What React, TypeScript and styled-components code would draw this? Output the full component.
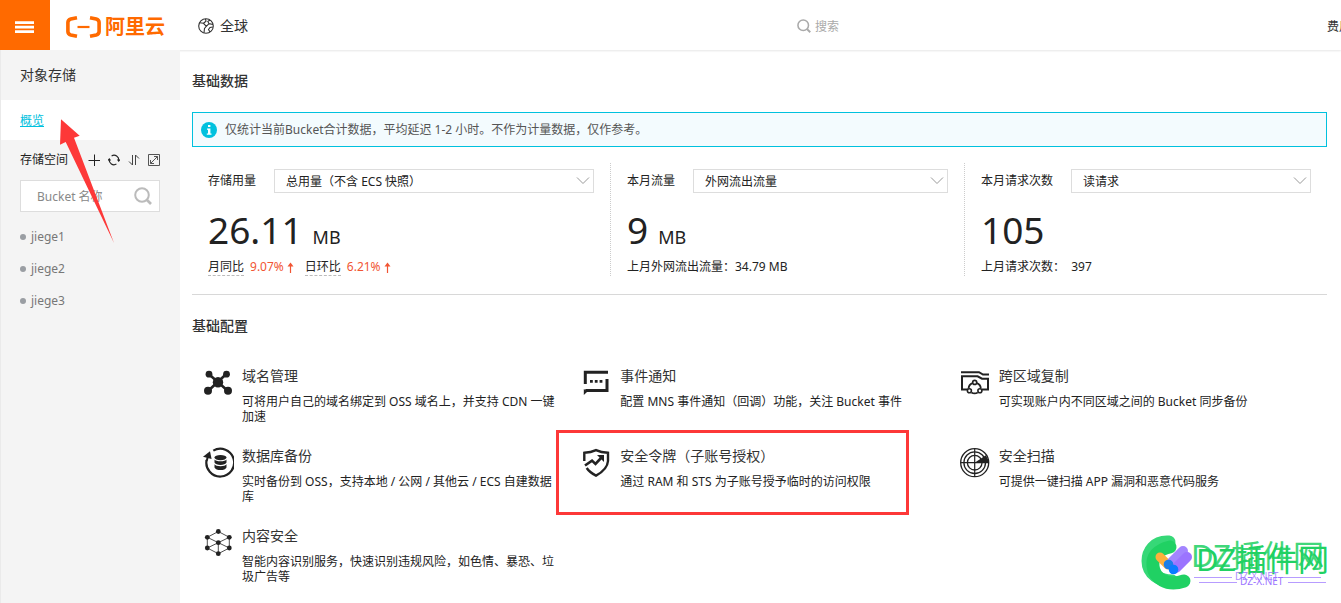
import React from "react";
import styled, { createGlobalStyle } from "styled-components";

const GlobalStyle = createGlobalStyle`
  *, *::before, *::after { box-sizing: border-box; }
  body {
    margin: 0;
    background: #fff;
    color: #222;
    font: 12px/16px "Noto Sans", "Noto Sans CJK SC", sans-serif;
  }
  button, input, select { font: inherit; color: inherit; }
  h1, h2, h3, p, ul { margin: 0; padding: 0; font-weight: 400; }
  a { color: inherit; text-decoration: none; }
  svg { display: block; flex: none; }
`;

const Page = styled.div`
  position: relative;
  min-height: 100vh;
  display: flex;
  flex-direction: column;
  overflow: hidden;
`;

const Header = styled.header`
  display: flex;
  align-items: center;
  height: 50px;
  background: #fff;
  box-shadow: 0 1px 2px rgba(0, 0, 0, 0.1);
  position: relative;
`;

const MenuButton = styled.button`
  display: flex;
  align-items: center;
  justify-content: center;
  width: 50px;
  height: 50px;
  padding: 4px 0 0;
  border: 0;
  background: #ff6a00;
`;

const Brand = styled.a`
  display: flex;
  align-items: center;
  gap: 4px;
  height: 50px;
  margin: 0 33px 0 16px;
  padding-top: 4px;
  color: #ff6a00;
  font-size: 20px;
  font-weight: 700;
  line-height: 24px;
`;

const Region = styled.button`
  display: flex;
  align-items: center;
  gap: 6px;
  margin-right: auto;
  padding: 2px 0 0;
  border: 0;
  background: none;
  color: #333;
  font-size: 14px;
  line-height: 20px;
`;

const HeaderSearch = styled.label`
  display: flex;
  align-items: center;
  gap: 4px;
  width: 520px;
  margin-right: 10px;
  padding-top: 2px;
  color: #aaa;
`;

const SearchInput = styled.input`
  flex: 1;
  min-width: 0;
  padding: 2px 0 0;
  border: 0;
  outline: 0;
  background: none;
  line-height: 20px;
  &::placeholder { color: #aaa; opacity: 1; }
`;

const HeaderNav = styled.nav`
  width: 14px;
  padding-top: 4px;
  overflow: hidden;
  white-space: nowrap;
  color: #333;
`;

const Body = styled.div`
  flex: 1;
  display: flex;
`;

const Sidebar = styled.aside`
  position: relative;
  flex: none;
  width: 180px;
  border-left: 1px solid #eaeaea;
  background: #f4f4f4;
`;

const ProductName = styled.h1`
  padding: 0 19px;
  color: #333;
  font-size: 14px;
  line-height: 50px;
`;

const ActiveItem = styled.div`
  height: 40px;
  padding: 0 19px;
  background: #fff;
  line-height: 42px;
  a { color: #00c1de; text-decoration: underline; }
`;

const BucketHead = styled.div`
  display: flex;
  align-items: center;
  justify-content: space-between;
  height: 40px;
  padding: 0 20px 0 19px;
  line-height: 42px;
`;

const Tools = styled.div`
  display: flex;
  gap: 8px;
`;

const ToolButton = styled.button`
  width: 12px;
  height: 12px;
  padding: 0;
  border: 0;
  background: none;
`;

const BucketSearch = styled.label`
  display: flex;
  align-items: center;
  height: 32px;
  margin: 0 20px 9px 19px;
  padding: 0 7px 0 16px;
  border: 1px solid #ddd;
  background: #fff;
  color: #bbb;
  input::placeholder { color: #888; }
`;

const BucketList = styled.ul`
  list-style: none;
  padding-left: 19px;
`;

const BucketItem = styled.li`
  display: flex;
  align-items: center;
  gap: 5px;
  height: 32px;
  color: #777;
  &::before {
    content: "";
    width: 6px;
    height: 6px;
    border-radius: 50%;
    background: #9a9ea3;
  }
`;

const Pointer = styled.svg`
  position: absolute;
  left: 59px;
  top: 69px;
  z-index: 2;
  pointer-events: none;
`;

const Main = styled.main`
  flex: 1;
  min-width: 0;
  padding: 20px 14px 0 12px;
`;

const SectionTitle = styled.h2<{ $spaced?: boolean }>`
  padding-top: ${(p) => (p.$spaced ? "20px" : "0")};
  color: #333;
  font-size: 14px;
  font-weight: 500;
  line-height: 22px;
`;

const Notice = styled.div`
  display: flex;
  align-items: center;
  gap: 8px;
  height: 35px;
  margin: 20px 0 16px;
  padding: 0 8px;
  border: 1px solid #00c1de;
  background: #f3fbfe;
  color: #555;
`;

const Stats = styled.div`
  display: grid;
  grid-template-columns: 419fr 354fr 362fr;
  padding-bottom: 18px;
  border-bottom: 1px solid #d8d8d8;
`;

const Stat = styled.section`
  padding: 6px 16px 0;
  min-width: 0;
  &:not(:last-child) { border-right: 1px dotted #ccc; }
`;

const StatHead = styled.div`
  display: flex;
  align-items: center;
  gap: 18px;
  line-height: 26px;
  height: 24px;
`;

const SelectBox = styled.div`
  position: relative;
  flex: 1;
  min-width: 0;
  svg {
    position: absolute;
    right: 4px;
    top: 7px;
    pointer-events: none;
  }
`;

const Select = styled.select`
  display: block;
  width: 100%;
  height: 24px;
  padding: 2px 24px 0 11px;
  border: 1px solid #ddd;
  border-radius: 0;
  background: #fff;
  appearance: none;
  line-height: 16px;
`;

const Figure = styled.p`
  display: flex;
  align-items: baseline;
  gap: 10px;
  height: 65px;
  padding-top: 8px;
  font-size: 37px;
  line-height: 58px;
  small { font-size: 18px; }
`;

const StatNote = styled.div`
  display: flex;
  height: 18px;
  line-height: 18px;
  white-space: pre;
`;

const Term = styled.span`
  height: 18px;
  border-bottom: 1px dashed #bbb;
`;

const Change = styled.span`
  display: flex;
  align-items: center;
  gap: 3px;
  margin: 0 11px 0 6px;
  color: #f15533;
`;

const Features = styled.div`
  display: grid;
  grid-template-columns: repeat(3, 1fr);
  grid-auto-rows: 80px;
  margin-top: 23px;
`;

const FeatureCard = styled.a<{ $marked?: boolean }>`
  position: relative;
  display: flex;
  gap: 8px;
  padding: 7px 8px 0 10px;
  &::after {
    content: "";
    display: ${(p) => (p.$marked ? "block" : "none")};
    position: absolute;
    inset: -10px 40px 5px -14px;
    border: 3px solid #fd3838;
    pointer-events: none;
  }
`;

const FeatureText = styled.div`
  flex: 1;
  min-width: 0;
`;

const FeatureTitle = styled.h3`
  color: #333;
  font-size: 14px;
  line-height: 18px;
`;

const FeatureDesc = styled.p`
  margin-top: 9px;
  line-height: 15px;
`;

const Watermark = styled.svg`
  position: absolute;
  right: 11px;
  bottom: 10px;
  pointer-events: none;
`;

const SearchIcon = ({ size }: { size: number }) => (
  <svg width={size} height={size} viewBox="0 0 18 18" fill="none" stroke="currentColor" strokeWidth="2">
    <circle cx="8" cy="8" r="6.8" />
    <path d="M13 13l4 4" strokeWidth="2.6" />
  </svg>
);

const Chevron = () => (
  <svg width="14" height="10" viewBox="0 0 14 10" fill="none" stroke="#999">
    <path d="M1 1.5L7 7.5L13 1.5" />
  </svg>
);

const UpArrow = () => (
  <svg width="7" height="11" viewBox="0 0 7 11" fill="none" stroke="currentColor" strokeWidth="1.2">
    <path d="M3.5 11V2" />
    <path d="M0.5 4.5L3.5 0.5L6.5 4.5Z" fill="currentColor" stroke="none" />
  </svg>
);

const FeatureIcon = ({ children }: { children: React.ReactNode }) => (
  <svg width="32" height="32" viewBox="0 0 32 32" fill="none" stroke="#222" aria-hidden="true">
    {children}
  </svg>
);

const icons = {
  domain: (
    <>
      <path d="M7 7.3L25.7 23.7M24.3 7L6.3 23.7" strokeWidth="2.6" />
      <g fill="#222" stroke="none">
        <circle cx="7" cy="7.2" r="3.4" />
        <circle cx="24.5" cy="7.2" r="3.4" />
        <circle cx="6" cy="23.7" r="4" />
        <circle cx="26" cy="23.7" r="4" />
        <circle cx="16" cy="15.3" r="5.2" />
      </g>
    </>
  ),
  notify: (
    <>
      <path d="M5.300 17V5.300H28M27 12V23.500H5.300" strokeWidth="3" />
      <path d="M3.800 22V28L7.500 24.500" fill="#222" stroke="none" />
      <path d="M10 14.300h2.800M14.800 14.300h2.800M19.600 14.300h2.800" strokeWidth="2.800" />
    </>
  ),
  copy: (
    <>
      <path d="M2 5.2H20L24 7.6H30" strokeWidth="2" />
      <path d="M9 22.5H3V9.3H18.6L23 11.7H29V22.5H23" strokeWidth="2" />
      <path d="M13.6 16.2A6 6 0 0 0 9.6 21.6M17.8 16.2A6 6 0 0 1 21.8 21.6M12.4 25.4A6 6 0 0 0 18.8 25.4" strokeWidth="1.8" />
      <circle cx="15.7" cy="15.4" r="2" strokeWidth="1.6" />
      <circle cx="10.4" cy="23.7" r="2" strokeWidth="1.6" />
      <circle cx="20.9" cy="23.7" r="2" strokeWidth="1.6" />
    </>
  ),
  backup: (
    <>
      <path d="M11.3 3.6A13.9 13.9 0 1 1 4.6 13" strokeWidth="2.2" />
      <path d="M1 9.8L8 4.2L9.6 12Z" fill="#222" stroke="none" />
      <path d="M4.6 14L6.4 8" strokeWidth="2" />
      <g fill="#222" stroke="none">
        <ellipse cx="18.5" cy="10.6" rx="6" ry="2.7" />
        <path d="M12.5 12.4c1 2.4 11 2.4 12 0v3.2c-1 3.2-11 3.2-12 0z" />
        <path d="M12.5 17.2c1 2.6 11 2.6 12 0v3.2c-1 3.4-11 3.4-12 0z" />
      </g>
    </>
  ),
  shield: (
    <>
      <path d="M4.3 14V5.8Q11 5.6 16 3.2Q21 5.6 28 5.8V14Q27.4 22.5 16 28.6Q9.500 25.3 6.700 21" strokeWidth="2.4" />
      <path d="M5 18.5L12 13.6L15.500 17L21.500 10.500" strokeWidth="2.6" />
      <path d="M17 8H24V15Z" fill="#222" stroke="none" />
    </>
  ),
  radar: (
    <>
      <circle cx="15.7" cy="15.7" r="14" strokeWidth="1.3" />
      <circle cx="15.7" cy="15.7" r="10.8" strokeWidth="1.3" />
      <circle cx="15.7" cy="15.7" r="7.3" strokeWidth="1.3" />
      <path d="M15.7 1.7V29.7M1.7 15.7H29.7" strokeWidth="1.2" />
      <path d="M15.7 15.7L26.8 8.2Q29.3 11.5 29.7 15.7Z" fill="#222" stroke="none" />
    </>
  ),
  content: (
    <>
      <path
        d="M16.3 4.5L5.3 10.3V21L16.3 26.7L27.3 21V10.3ZM5.3 10.3L27.3 21M27.3 10.3L5.3 21M16.3 15.7V26.7"
        strokeWidth="0.8"
      />
      <g fill="#222" stroke="none">
        <circle cx="16.3" cy="4.5" r="2.4" />
        <circle cx="5.3" cy="10.3" r="2.4" />
        <circle cx="27.3" cy="10.3" r="2.4" />
        <circle cx="5.3" cy="21" r="2.4" />
        <circle cx="27.3" cy="21" r="2.4" />
        <circle cx="16.3" cy="26.7" r="2.4" />
        <circle cx="16.3" cy="15.7" r="2.4" />
      </g>
    </>
  ),
};

const features: { icon: keyof typeof icons; title: string; desc: string; marked?: boolean }[] = [
  { icon: "domain", title: "域名管理", desc: "可将用户自己的域名绑定到 OSS 域名上，并支持 CDN 一键加速" },
  { icon: "notify", title: "事件通知", desc: "配置 MNS 事件通知（回调）功能，关注 Bucket 事件" },
  { icon: "copy", title: "跨区域复制", desc: "可实现账户内不同区域之间的 Bucket 同步备份" },
  { icon: "backup", title: "数据库备份", desc: "实时备份到 OSS，支持本地 / 公网 / 其他云 / ECS 自建数据库" },
  { icon: "shield", title: "安全令牌（子账号授权）", desc: "通过 RAM 和 STS 为子账号授予临时的访问权限", marked: true },
  { icon: "radar", title: "安全扫描", desc: "可提供一键扫描 APP 漏洞和恶意代码服务" },
  { icon: "content", title: "内容安全", desc: "智能内容识别服务，快速识别违规风险，如色情、暴恐、垃圾广告等" },
];

const buckets = ["jiege1", "jiege2", "jiege3"];

interface StatBlockProps {
  id: string;
  label: string;
  option: string;
  value: string;
  unit?: string;
  children: React.ReactNode;
}

const StatBlock = ({ id, label, option, value, unit, children }: StatBlockProps) => (
  <Stat>
    <StatHead>
      <label htmlFor={id}>{label}</label>
      <SelectBox>
        <Select id={id}>
          <option>{option}</option>
        </Select>
        <Chevron />
      </SelectBox>
    </StatHead>
    <Figure>
      {value}
      {unit && <small>{unit}</small>}
    </Figure>
    <StatNote>{children}</StatNote>
  </Stat>
);

export default function App() {
  return (
    <Page>
      <GlobalStyle />
      <Header>
        <MenuButton aria-label="菜单">
          <svg width="20" height="12" viewBox="0 0 20 12" stroke="#fff" strokeWidth="2.6">
            <path d="M0 1.6H19M0 6.1H19M0 10.6H19" />
          </svg>
        </MenuButton>
        <Brand href="#">
          <svg width="35" height="22" viewBox="0 0 35 22" fill="none" stroke="#ff6a00">
            <path d="M11 1.8L4.8 3Q1.9 3.8 1.9 6.5V15.5Q1.9 18.2 4.8 19L11 20.2" strokeWidth="3.6" />
            <path d="M24 1.8L30.2 3Q33.1 3.8 33.1 6.5V15.5Q33.1 18.2 30.2 19L24 20.2" strokeWidth="3.6" />
            <path d="M11.5 11H23.5" strokeWidth="2.2" />
          </svg>
          <span>阿里云</span>
        </Brand>
        <Region>
          <svg width="16" height="16" viewBox="0 0 16 16" fill="none" stroke="#333" strokeWidth="1.1">
            <circle cx="8" cy="8" r="7.3" />
            <path d="M1.5 4.8L5.500 5.3L8.3 8.3L6.5 10.5L6 14.8M5.5 5.3L8 3.3L7.5 0.8M8.3 8.3L11 5.6L9.8 3.500L12 2M11 5.6L15 6.5M12 14L10.500 11.500L12 9.500L14.800 9" />
          </svg>
          全球
        </Region>
        <HeaderSearch>
          <SearchIcon size={14} />
          <SearchInput placeholder="搜索" aria-label="搜索" />
        </HeaderSearch>
        <HeaderNav>
          <a href="#">费用</a>
        </HeaderNav>
      </Header>

      <Body>
        <Sidebar>
          <ProductName>对象存储</ProductName>
          <ActiveItem>
            <a href="#">概览</a>
          </ActiveItem>
          <BucketHead>
            <span>存储空间</span>
            <Tools>
              <ToolButton aria-label="新建">
                <svg width="12" height="12" viewBox="0 0 12 12" stroke="#222">
                  <path d="M0.5 6.5H12M6.5 0.5V12" />
                </svg>
              </ToolButton>
              <ToolButton aria-label="刷新">
                <svg width="12" height="12" viewBox="0 0 12 12" fill="none" stroke="#222" strokeWidth="1.2">
                  <path d="M3.6 1.9A4.8 4.8 0 0 1 10.8 6.6M8.4 10.1A4.8 4.8 0 0 1 1.2 5.4" />
                  <path d="M8.8 5.6H12.4L10.7 8ZM-0.4 6.4H3.2L1.3 4Z" fill="#222" stroke="none" />
                </svg>
              </ToolButton>
              <ToolButton aria-label="排序">
                <svg width="12" height="12" viewBox="0 0 12 12" fill="none" stroke="#444">
                  <path d="M4.5 1V11L1 7.5M7.5 11V1L11 4.5" />
                </svg>
              </ToolButton>
              <ToolButton aria-label="展开">
                <svg width="12" height="12" viewBox="0 0 12 12" fill="none" stroke="#555">
                  <path d="M0.5 0.5H11.5V11.5H0.5ZM6 2.5H9.5V6M9.5 2.5L2.5 9.5M2.5 6V9.5H6" />
                </svg>
              </ToolButton>
            </Tools>
          </BucketHead>
          <BucketSearch>
            <SearchInput placeholder="Bucket 名称" aria-label="Bucket 名称" />
            <SearchIcon size={18} />
          </BucketSearch>
          <BucketList>
            {buckets.map((name) => (
              <BucketItem key={name}>
                <a href="#">{name}</a>
              </BucketItem>
            ))}
          </BucketList>
          <Pointer width="55" height="125" viewBox="0 0 55 125" aria-hidden="true">
            <path d="M1 0.3L19.7 16.7L14 18.7L54 124L5.7 23L0 25.7Z" fill="#fd3838" />
          </Pointer>
        </Sidebar>

        <Main>
          <SectionTitle>基础数据</SectionTitle>
          <Notice>
            <svg width="16" height="16" viewBox="0 0 16 16" fill="none">
              <circle cx="8" cy="8" r="8" fill="#00c1de" />
              <path d="M7 3H9.4V5H7ZM6 6.5H9.4V11.5H10.5V12.8H5.8V11.5H7V7.8H6Z" fill="#fff" />
            </svg>
            仅统计当前Bucket合计数据，平均延迟 1-2 小时。不作为计量数据，仅作参考。
          </Notice>
          <Stats>
            <StatBlock id="storage" label="存储用量" option="总用量（不含 ECS 快照）" value="26.11" unit="MB">
              <Term>月同比</Term>
              <Change>
                9.07%
                <UpArrow />
              </Change>
              <Term>日环比</Term>
              <Change>
                6.21%
                <UpArrow />
              </Change>
            </StatBlock>
            <StatBlock id="traffic" label="本月流量" option="外网流出流量" value="9" unit="MB">
              上月外网流出流量：34.79 MB
            </StatBlock>
            <StatBlock id="requests" label="本月请求次数" option="读请求" value="105">
              上月请求次数：  397
            </StatBlock>
          </Stats>

          <SectionTitle $spaced>基础配置</SectionTitle>
          <Features>
            {features.map((f) => (
              <FeatureCard key={f.title} href="#" $marked={f.marked}>
                <FeatureIcon>{icons[f.icon]}</FeatureIcon>
                <FeatureText>
                  <FeatureTitle>{f.title}</FeatureTitle>
                  <FeatureDesc>{f.desc}</FeatureDesc>
                </FeatureText>
              </FeatureCard>
            ))}
          </Features>
        </Main>
      </Body>

      <Watermark width="190" height="60" viewBox="0 0 190 60" fill="none" strokeLinecap="round">
        <path d="M29 9C14 8 8 19 8 28C8 41 20 48 32 48" stroke="#36d877" strokeWidth="13" />
        <path d="M30 14C17 17 12 24 13 33C14 45 27 54 44 48" stroke="#20d163" strokeWidth="13" />
        <path d="M20 24L28 32" stroke="#fdb03c" strokeWidth="9" />
        <path d="M43 18L32 29" stroke="#a385ff" strokeWidth="10" />
        <path d="M47 24L36 35" stroke="#9b74ff" strokeWidth="10" />
        <circle cx="28.5" cy="31.5" r="4.8" fill="#1a7fe8" />
        <circle cx="33.5" cy="36.5" r="4.8" fill="#087bff" />
        <g fill="#20d163" fontSize="31">
          <text x="51" y="34" opacity="0.85">DZ插件网</text>
          <text x="56" y="38">DZ插件网</text>
        </g>
        <g fill="#9b74ff" fontSize="10">
          <text x="95" y="47" opacity="0.8">DZ-X.NET</text>
          <text x="100" y="52">DZ-X.NET</text>
        </g>
        <path d="M54 44.5H92M143 44.5H181M59 49.5H97M148 49.5H186" stroke="#b79cff" strokeLinecap="butt" />
      </Watermark>
    </Page>
  );
}
